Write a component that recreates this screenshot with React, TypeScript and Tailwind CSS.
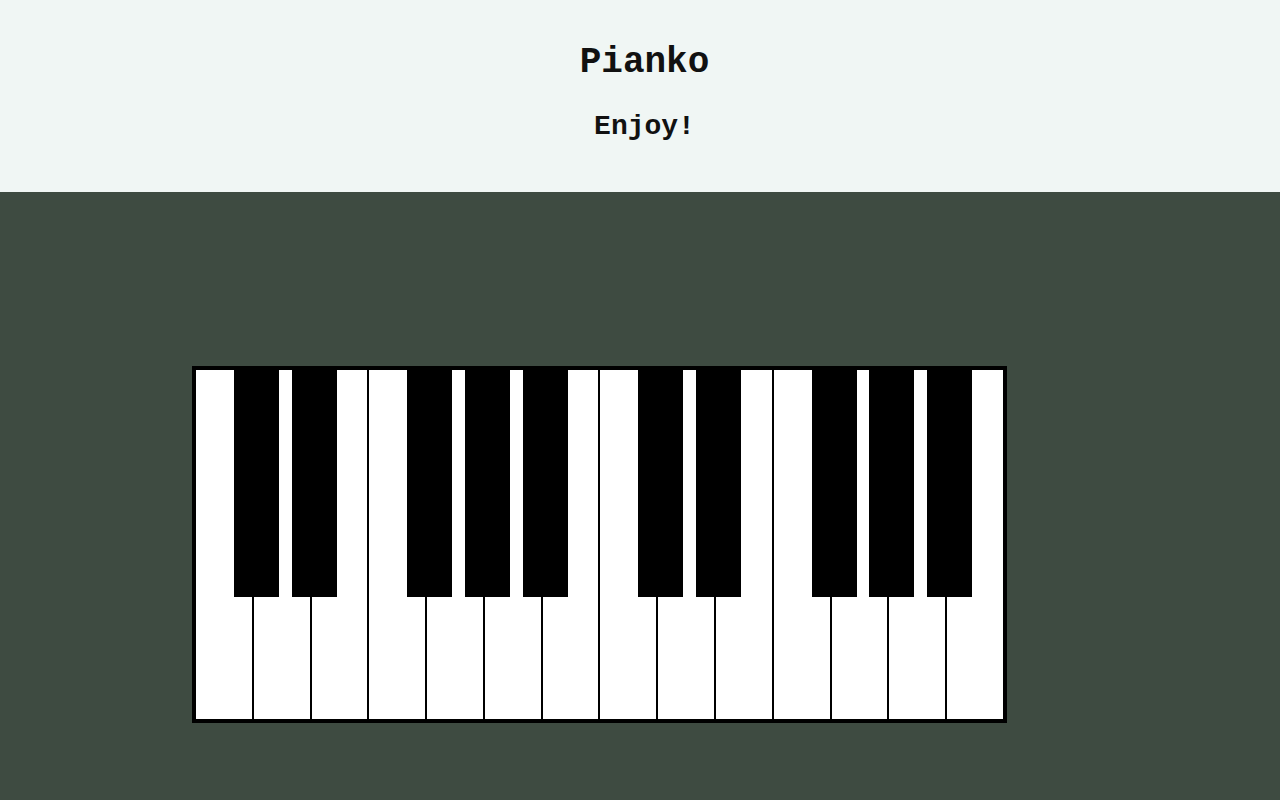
const whiteKeys = ["C", "D", "E", "F", "G", "A", "B", "C2", "D2", "E2", "F2", "G2", "A2", "B2"];
// white keys that have a black key sitting on their right edge
const hasSharp = ["C", "D", "F", "G", "A", "C2", "D2", "F2", "G2", "A2"];

const App = () => {
  return (
    <div className="min-h-screen bg-[#3e4b41] font-['Liberation_Mono',monospace]">
      <header className="h-[192px] bg-[#f0f6f4] flex flex-col items-center pt-[41px] pl-[9px] text-[#111]">
        <h1 className="text-[36px] font-bold leading-[44px]">Pianko</h1>
        <h2 className="text-[28px] font-bold leading-[34px] mt-[25px]">Enjoy!</h2>
      </header>
      <main className="pt-[174px] pl-[192px]">
        <div className="flex w-[815px] h-[357px] border-4 border-black bg-white">
          {whiteKeys.map((key, i) => (
            <div
              key={key}
              className={`relative flex-1 bg-white ${i > 0 ? "border-l-2 border-black" : ""}`}
            >
              {hasSharp.includes(key) && (
                <div className="absolute top-0 left-[calc(100%-18px)] w-[45px] h-[227px] bg-black z-10" />
              )}
            </div>
          ))}
        </div>
      </main>
    </div>
  );
};

export default App;
